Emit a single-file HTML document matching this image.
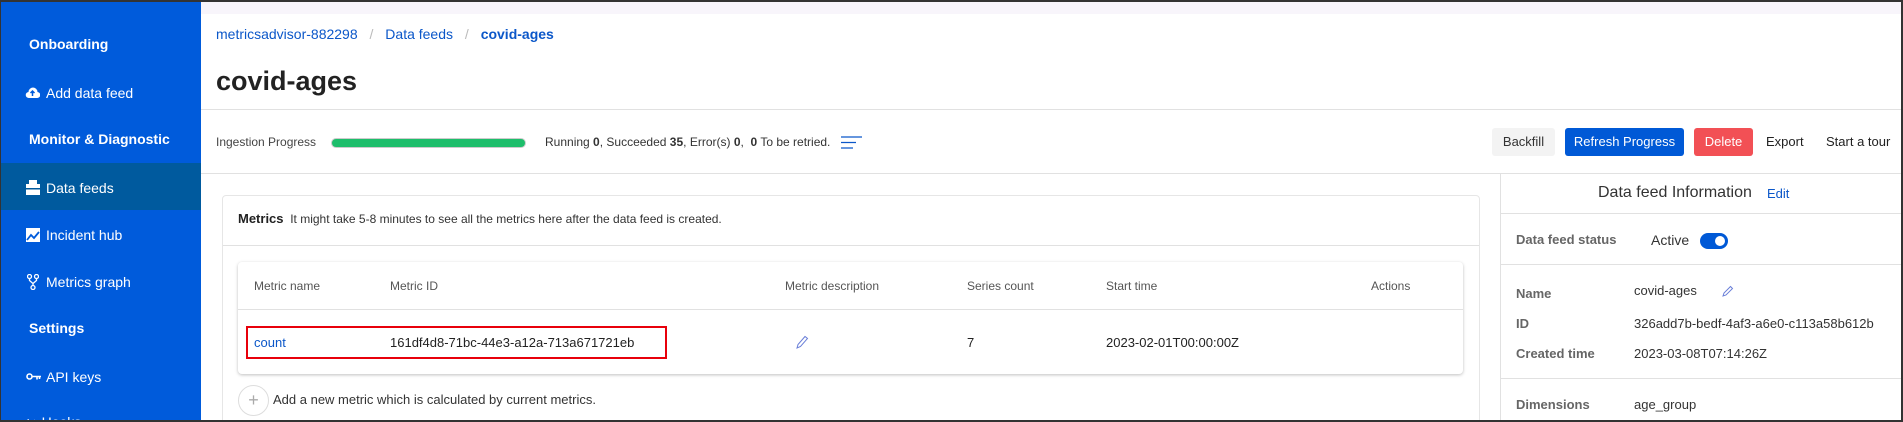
<!DOCTYPE html>
<html style="width:1903px;height:422px;overflow:hidden"><head><meta charset="utf-8"><style>
*{box-sizing:border-box;margin:0;padding:0}
body{width:1903px;height:422px;overflow:hidden;position:relative;font-family:"Liberation Sans",Arial,sans-serif;background:#fff;color:#222}
.a{position:absolute;white-space:nowrap}
#frame{position:absolute;left:0;top:0;width:1903px;height:422px;border:1px solid #333;border-top:2px solid #333;border-right:2px solid #333;border-bottom:2px solid #333;pointer-events:none;z-index:9}
#sb{position:absolute;left:0;top:0;width:201px;height:422px;background:#005bdb}
.sh{color:#fff;font-weight:bold;font-size:14px;left:29px}
.si{color:#fff;font-size:14px;left:46px}
.line{position:absolute;height:1px;background:#e1e1e1}
.bc{font-size:14px;color:#0b57c9}
.hd{font-size:12px;color:#555}
.td{font-size:13px;color:#222}
.btn{position:absolute;height:28px;border-radius:3px;font-size:13px;text-align:center;line-height:28px}
.lab{font-size:13px;color:#666;font-weight:bold;left:1516px}
.val{font-size:13px;color:#333;left:1634px}
</style></head><body>
<div id="sb">
 <div style="position:absolute;left:0;top:163px;width:201px;height:47px;background:#005a9e"></div>
 <div class="a sh" style="top:36px">Onboarding</div>
 <svg class="a" style="left:25px;top:87px" width="15" height="12" viewBox="0 0 15 12"><path d="M4 11h8a3 3 0 0 0 .5-6A4.5 4.5 0 0 0 3.5 5 3 3 0 0 0 4 11z" fill="#fff"/><path d="M7.5 4v5M5.5 6l2-2 2 2" stroke="#005bdb" stroke-width="1.5" fill="none"/></svg>
 <div class="a si" style="top:85px">Add data feed</div>
 <div class="a sh" style="top:131px">Monitor &amp; Diagnostic</div>
 <svg class="a" style="left:26px;top:180px" width="14" height="15" viewBox="0 0 14 15"><rect x="3" y="0" width="8" height="4" fill="#fff"/><rect x="0" y="4" width="14" height="11" fill="#fff"/><rect x="0" y="8" width="14" height="1.5" fill="#005a9e"/></svg>
 <div class="a si" style="top:180px">Data feeds</div>
 <svg class="a" style="left:26px;top:228px" width="14" height="14" viewBox="0 0 14 14"><rect width="14" height="14" fill="#fff"/><path d="M1 12l4-5 3 3 5-6" stroke="#005bdb" stroke-width="1.8" fill="none"/></svg>
 <div class="a si" style="top:227px">Incident hub</div>
 <svg class="a" style="left:27px;top:274px" width="12" height="16" viewBox="0 0 12 16"><circle cx="2.5" cy="2.5" r="2" stroke="#fff" fill="none" stroke-width="1.3"/><circle cx="9.5" cy="2.5" r="2" stroke="#fff" fill="none" stroke-width="1.3"/><circle cx="6" cy="13.5" r="2" stroke="#fff" fill="none" stroke-width="1.3"/><path d="M2.5 4.5v2l3.5 3v2M9.5 4.5v2L6 9.5" stroke="#fff" fill="none" stroke-width="1.3"/></svg>
 <div class="a si" style="top:274px">Metrics graph</div>
 <div class="a sh" style="top:320px">Settings</div>
 <svg class="a" style="left:26px;top:372px" width="15" height="9" viewBox="0 0 15 9"><circle cx="3.5" cy="4.5" r="2.5" stroke="#fff" fill="none" stroke-width="1.6"/><path d="M6 4.5h9M11 4.5v3M13.5 4.5v2.5" stroke="#fff" stroke-width="1.6"/></svg>
 <div class="a si" style="top:369px">API keys</div>
 <div class="a si" style="top:414px;left:26px">↪ Hooks</div>
</div>
<div style="position:absolute;left:201px;top:2px;width:1700px;height:12px;background:#f8f5fb"></div>
<div class="a bc" style="left:216px;top:26px">metricsadvisor-882298 <span style="color:#bbb;margin:0 8px">/</span> Data feeds <span style="color:#bbb;margin:0 8px">/</span> <b>covid-ages</b></div>
<div class="a" style="left:216px;top:66px;font-size:27px;font-weight:bold;color:#222">covid-ages</div>
<div class="line" style="left:201px;top:109px;width:1700px"></div>
<div class="a" style="left:216px;top:135px;font-size:12px;color:#444">Ingestion Progress</div>
<div class="a" style="left:331px;top:138px;width:195px;height:10px;border-radius:5px;background:#1dbe6b;border:1px solid #ccc"></div>
<div class="a" style="left:545px;top:135px;font-size:12px;color:#333">Running <b>0</b>, Succeeded <b>35</b>, Error(s) <b>0</b>,&nbsp; <b>0</b> To be retried.</div>
<svg class="a" style="left:841px;top:136px" width="21" height="13" viewBox="0 0 21 13"><path d="M0 1h21M0 6.5h15M0 12h12" stroke="#0b57c9" stroke-width="1.3"/></svg>
<div class="btn" style="left:1492px;top:128px;width:63px;background:#f3f3f3;color:#333">Backfill</div>
<div class="btn" style="left:1565px;top:128px;width:119px;background:#0059d6;color:#fff">Refresh Progress</div>
<div class="btn" style="left:1694px;top:128px;width:59px;background:#f25055;color:#fff">Delete</div>
<div class="a" style="left:1766px;top:134px;font-size:13px;color:#222">Export</div>
<div class="a" style="left:1826px;top:134px;font-size:13px;color:#222">Start a tour</div>
<div class="line" style="left:201px;top:173px;width:1700px"></div>
<div style="position:absolute;left:1500px;top:173px;width:1px;height:249px;background:#e1e1e1"></div>
<div class="a" style="left:1598px;top:184px;font-size:16px;color:#333">Data feed Information</div>
<div class="a" style="left:1767px;top:186px;font-size:13px;color:#0b57c9">Edit</div>
<div class="line" style="left:1501px;top:213px;width:400px"></div>
<div class="a lab" style="top:232px">Data feed status</div>
<div class="a" style="left:1651px;top:232px;font-size:14px;color:#333">Active</div>
<div class="a" style="left:1700px;top:233px;width:28px;height:16px;border-radius:8px;background:#0059d6"><div style="position:absolute;right:3px;top:3px;width:10px;height:10px;border-radius:5px;background:#fff"></div></div>
<div class="line" style="left:1501px;top:264px;width:400px"></div>
<div class="a lab" style="top:286px">Name</div>
<div class="a val" style="top:283px">covid-ages</div>
<svg class="a" style="left:1722px;top:285px" width="12" height="12" viewBox="0 0 12 12"><path d="M1 11l1-3 6.5-6.5 2 2L4 10z" stroke="#6a7fd8" fill="none" stroke-width="1"/></svg>
<div class="a lab" style="top:316px">ID</div>
<div class="a val" style="top:316px">326add7b-bedf-4af3-a6e0-c113a58b612b</div>
<div class="a lab" style="top:346px">Created time</div>
<div class="a val" style="top:346px">2023-03-08T07:14:26Z</div>
<div class="line" style="left:1501px;top:378px;width:400px"></div>
<div class="a lab" style="top:397px">Dimensions</div>
<div class="a val" style="top:397px">age_group</div>
<div style="position:absolute;left:222px;top:195px;width:1258px;height:240px;border:1px solid #e6e6e6;border-radius:4px"></div>
<div class="a" style="left:238px;top:211px;font-size:12px;color:#333"><b style="font-size:13px;color:#222">Metrics</b>&nbsp; It might take 5-8 minutes to see all the metrics here after the data feed is created.</div>
<div class="line" style="left:223px;top:245px;width:1256px"></div>
<div style="position:absolute;left:238px;top:262px;width:1225px;height:112px;border-radius:4px;box-shadow:0 1px 3px rgba(0,0,0,.25);background:#fff"></div>
<div class="line" style="left:238px;top:309px;width:1225px"></div>
<div class="a hd" style="left:254px;top:279px">Metric name</div>
<div class="a hd" style="left:390px;top:279px">Metric ID</div>
<div class="a hd" style="left:785px;top:279px">Metric description</div>
<div class="a hd" style="left:967px;top:279px">Series count</div>
<div class="a hd" style="left:1106px;top:279px">Start time</div>
<div class="a hd" style="left:1371px;top:279px">Actions</div>
<div class="a" style="left:246px;top:326px;width:421px;height:33px;border:2px solid #e8000b"></div>
<div class="a td" style="left:254px;top:335px;color:#0b57c9">count</div>
<div class="a td" style="left:390px;top:335px">161df4d8-71bc-44e3-a12a-713a671721eb</div>
<svg class="a" style="left:796px;top:335px" width="13" height="14" viewBox="0 0 13 14"><path d="M1 13l1-3.5 7-8 2.5 2-7 8z" stroke="#6a7fd8" fill="none" stroke-width="1"/></svg>
<div class="a td" style="left:967px;top:335px">7</div>
<div class="a td" style="left:1106px;top:335px">2023-02-01T00:00:00Z</div>
<div class="a" style="left:238px;top:385px;width:31px;height:31px;border-radius:50%;border:1px solid #ddd;text-align:center;line-height:28px;color:#aaa;font-size:18px">+</div>
<div class="a" style="left:273px;top:392px;font-size:13px;color:#333">Add a new metric which is calculated by current metrics.</div>
<div id="frame"></div>
</body></html>
